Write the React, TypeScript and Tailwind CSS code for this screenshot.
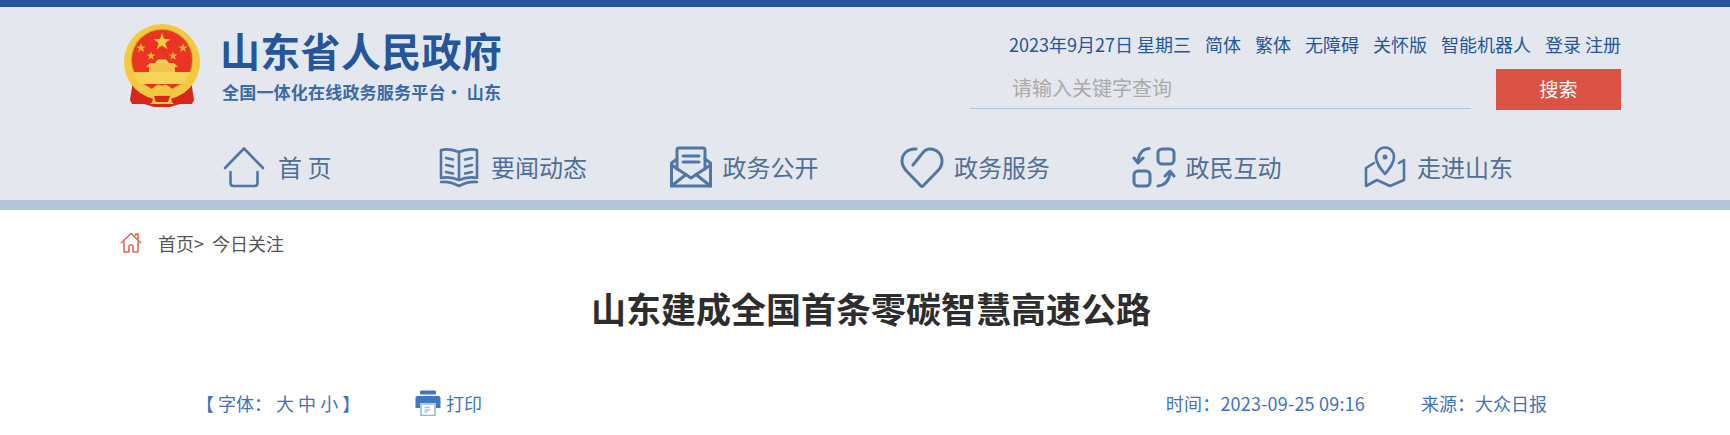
const cjk = "font-['Noto_Sans_CJK_SC','Liberation_Sans',sans-serif]";

function Star({ x, y, r, fill }: { x: number; y: number; r: number; fill: string }) {
  const pts = Array.from({ length: 10 }, (_, i) => {
    const a = (Math.PI / 5) * i - Math.PI / 2;
    const d = i % 2 === 0 ? r : r * 0.4;
    return `${(x + Math.cos(a) * d).toFixed(2)},${(y + Math.sin(a) * d).toFixed(2)}`;
  }).join(" ");
  return <polygon points={pts} fill={fill} />;
}

function Emblem() {
  return (
    <svg width="80" height="84" viewBox="0 0 80 84" className="shrink-0">
      <path d="M12 50 L8 76 L10 80 L22 80 L32 83 L48 83 L58 80 L70 80 L72 76 L68 50 Z" fill="#d8261c" />
      <circle cx="40" cy="38" r="38" fill="#f5c93f" />
      <circle cx="40" cy="36" r="31" fill="#c9a02e" />
      <circle cx="40" cy="36" r="30" fill="#ec3423" />
      <path d="M11 48 H69 L62 60 H18 Z" fill="#f7d35a" />
      <path d="M27 48 V43 H24 L28 39 H52 L56 43 H53 V48 Z" fill="#f3c44b" />
      <path d="M33 39 L36 35.5 H44 L47 39 Z" fill="#f7d35a" />
      <Star x={40} y={18} r={9} fill="#f6cf3f" />
      <Star x={19} y={24} r={5} fill="#e9b93a" />
      <Star x={61} y={24} r={5} fill="#e9b93a" />
      <Star x={29} y={32} r={4.5} fill="#e9b93a" />
      <Star x={51} y={32} r={4.5} fill="#e9b93a" />
      <path d="M14 60 Q26 60 29 66 Q36 58 40 62 Q44 58 51 66 Q54 60 66 60 L62 69 Q54 72 50 70 Q48 78 52 80 H28 Q32 78 30 70 Q26 72 18 69 Z" fill="#f5c93f" />
      <path d="M32 72 H48 L46 78 H34 Z" fill="#d8261c" />
    </svg>
  );
}

const iconCls = "fill-none stroke-[#4f76a6] stroke-[2.6]";

function HomeIcon() {
  return (
    <svg width="44" height="44" viewBox="0 0 44 44" className={iconCls} strokeLinecap="round" strokeLinejoin="round">
      <path d="M3 23 L22 3.5 L41 23" />
      <path d="M8.5 27 V38 Q8.5 41 11.5 41 H32.5 Q35.5 41 35.5 38 V27" />
    </svg>
  );
}

function BookIcon() {
  return (
    <svg width="44" height="44" viewBox="0 0 44 44" className={iconCls} strokeLinejoin="round" strokeLinecap="round">
      <path d="M4 5 Q13 3 22 7 Q31 3 40 5 V33 Q31 31 22 35 Q13 31 4 33 Z" />
      <path d="M22 7 V35" />
      <path d="M9 13 L16 14.5 M9 20 L16 21.5 M9 27 L16 28.5 M28 14.5 L35 13 M28 21.5 L35 20 M28 28.5 L35 27" />
      <path d="M4 37 Q13 36 22 41 Q31 36 40 37" />
    </svg>
  );
}

function MailIcon() {
  return (
    <svg width="44" height="44" viewBox="0 0 44 44" className="fill-none stroke-[#4f76a6] stroke-[3]" strokeLinejoin="round" strokeLinecap="round">
      <path d="M8 24 V5 Q8 3 10 3 H34 Q36 3 36 5 V24" />
      <path d="M14 11 H30 M14 17 H30" />
      <path d="M8 14 L2.5 18 V41 H41.5 V18 L36 14" />
      <path d="M2.5 20 L22 33 L41.5 20" />
      <path d="M2.5 41 L17 29.5 M41.5 41 L27 29.5" />
    </svg>
  );
}

function HeartIcon() {
  return (
    <svg width="44" height="44" viewBox="0 0 44 44" className="fill-none stroke-[#4f76a6] stroke-[3]" strokeLinejoin="round" strokeLinecap="round">
      <path d="M16 4 C8 3 2 9 2 16 C2 20 4 23 6 25.5 L21 41 Q22 42 23 41 L38 25.5 C40.5 23 42 20 42 16 C42 9 36 3 29 4 C25 4.5 23 7 21 10 L13 20" />
    </svg>
  );
}

function SwapIcon() {
  return (
    <svg width="44" height="44" viewBox="0 0 44 44" className="fill-none stroke-[#4f76a6] stroke-[3]" strokeLinejoin="round" strokeLinecap="round">
      <rect x="26" y="4" width="16" height="15" rx="4" />
      <rect x="2" y="26" width="16" height="15" rx="4" />
      <path d="M17 3.5 Q8 4 6 15" />
      <path d="M2 13 L6 18 L11 13" />
      <path d="M26 41 Q36 40 38 29" />
      <path d="M33 31 L38 26 L42 31" />
    </svg>
  );
}

function MapIcon() {
  return (
    <svg width="44" height="44" viewBox="0 0 44 44" className={iconCls} strokeLinejoin="round" strokeLinecap="round">
      <path d="M22 29 C17 23 13 18 13 12 C13 6.5 17 2.5 22 2.5 C27 2.5 31 6.5 31 12 C31 18 27 23 22 29 Z" />
      <circle cx="22" cy="12" r="2.5" className="fill-[#4f76a6] stroke-none" />
      <path d="M11 18 L3 23 V41 L14 35 L27 41 L41 35 V15 L36 18" />
    </svg>
  );
}

function PrintIcon() {
  return (
    <svg width="26" height="26" viewBox="0 0 26 26" className="shrink-0">
      <rect x="5" y="0.5" width="16" height="4" rx="1" fill="#3f78bf" />
      <path d="M0.5 8 Q0.5 6 2.5 6 H23.5 Q25.5 6 25.5 8 V18 H21 V13 H5 V18 H0.5 Z" fill="#3f78bf" />
      <rect x="6" y="14" width="14" height="11.5" fill="#fff" stroke="#8fb4e0" strokeWidth="1.5" />
      <path d="M9.5 17.5 H15 M9.5 20 H15 M9.5 22 H12.5" stroke="#a9c4e6" strokeWidth="1.4" />
    </svg>
  );
}

const navItems = [
  { label: "首 页", Icon: HomeIcon, cls: "w-[215px] gap-[12px]" },
  { label: "要闻动态", Icon: BookIcon, cls: "w-[231.5px] gap-[10px]" },
  { label: "政务公开", Icon: MailIcon, cls: "w-[231.5px] gap-[10px]" },
  { label: "政务服务", Icon: HeartIcon, cls: "w-[231.5px] gap-[10px]" },
  { label: "政民互动", Icon: SwapIcon, cls: "w-[231.5px] gap-[10px]" },
  { label: "走进山东", Icon: MapIcon, cls: "w-[231.5px] gap-[10px]" },
];

const topLinks = ["简体", "繁体", "无障碍", "关怀版", "智能机器人"];

export default function App() {
  return (
    <div className={`h-[435px] overflow-hidden bg-white ${cjk}`}>
      {/* Header */}
      <header className="h-[210px] border-t-[7px] border-b-[10px] border-t-[#25559b] border-b-[#b3c5d7] bg-[#e4e8ee]">
        <div className="flex h-[138px] justify-between pr-[109px] pl-[122px]">
          <div className="flex pt-[17px]">
            <Emblem />
            <div className="ml-[18px]">
              <div className="mt-[1px] text-[40px] leading-[50px] font-bold tracking-[0.3px] whitespace-nowrap text-[#25559b]">山东省人民政府</div>
              <div className="mt-[5px] ml-[2px] text-[17px] leading-[24px] font-bold tracking-[0.2px] whitespace-nowrap text-[#3b6aa8]">全国一体化在线政务服务平台· 山东</div>
            </div>
          </div>

          <div className="flex w-[651px] flex-col items-end">
            <div className="mt-[24px] flex h-[26px] items-center text-[18px] leading-[26px] whitespace-nowrap text-[#25559b]">
              <span className="mr-[14px]">2023年9月27日 星期三</span>
              {topLinks.map((t) => (
                <span key={t} className="mr-[14px]">{t}</span>
              ))}
              <span>登录 注册</span>
            </div>
            <div className="mt-[12px] flex w-full items-start justify-between">
              <div className="h-[40px] w-[501px] border-b border-[#b3c5d7] pl-[42px] text-[20px] leading-[38px] text-[#aaaaaa]">请输入关键字查询</div>
              <button className="h-[41px] w-[125px] bg-[#da5344] text-[19px] text-white">搜索</button>
            </div>
          </div>
        </div>

        {/* Nav */}
        <nav className="ml-[222px] flex h-[44px] items-start">
          {navItems.map(({ label, Icon, cls }) => (
            <div key={label} className={`flex items-center ${cls}`}>
              <Icon />
              <span className="text-[24px] leading-[44px] whitespace-nowrap text-[#4f6f98]">{label}</span>
            </div>
          ))}
        </nav>
      </header>

      {/* Breadcrumb */}
      <div className="mt-[21px] flex h-[24px] items-center pl-[120px] text-[18px] text-[#555555]">
        <svg width="22" height="22" viewBox="0 0 22 22" className="fill-none stroke-[#e0675c] stroke-[1.6]" strokeLinejoin="round">
          <path d="M1 11 L11 1.5 L21 11" />
          <path d="M4 9.5 V20 H9 V14 Q11 11.5 13 14 V20 H18 V9.5" />
          <path d="M15.5 4 V2 H18 V7" />
        </svg>
        <span className="ml-[16px] whitespace-nowrap">首页&gt;</span>
        <span className="ml-[8px] whitespace-nowrap">今日关注</span>
      </div>

      {/* Title */}
      <h1 className="mt-[27px] pl-[12px] text-center text-[35px] leading-[52px] font-bold text-[#2d2d2d]">山东建成全国首条零碳智慧高速公路</h1>

      {/* Meta row */}
      <div className="mt-[55px] flex h-[28px] items-center justify-between pr-[183px] pl-[196px] text-[18px] whitespace-nowrap text-[#3f74bb]">
        <div className="flex items-center">
          <span className="w-[219px]">【 字体： 大 中 小 】</span>
          <PrintIcon />
          <span className="ml-[5px]">打印</span>
        </div>
        <div className="flex gap-[56px]">
          <span className="tracking-[0.2px]">时间：2023-09-25 09:16</span>
          <span>来源：大众日报</span>
        </div>
      </div>
    </div>
  );
}
